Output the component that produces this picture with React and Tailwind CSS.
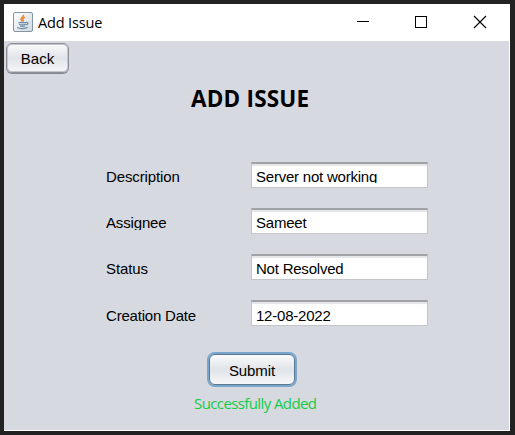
import React from "react";

const fields = [
  { label: "Description", value: "Server not working", clip: "h-[19px]", labelClip: "h-[20px]", shift: "", spacing: "tracking-[-0.12px]" },
  { label: "Assignee", value: "Sameet", clip: "h-[22px]", labelClip: "h-[16px]", shift: "", spacing: "tracking-[-0.15px]" },
  { label: "Status", value: "Not Resolved", clip: "h-[23px]", labelClip: "h-[20px]", shift: "", spacing: "tracking-[-0.1px]" },
  { label: "Creation Date", value: "12-08-2022", clip: "h-[23px]", labelClip: "h-[20px]", shift: "pt-px", spacing: "tracking-[-0.2px]" },
];

function JavaIcon() {
  return (
    <svg width="20" height="20" viewBox="0 0 20 20" fill="none">
      <defs>
        <linearGradient id="tile" x1="0" y1="0" x2="1" y2="1">
          <stop offset="0" stopColor="#ffffff" />
          <stop offset="1" stopColor="#cfd8df" />
        </linearGradient>
      </defs>
      <rect x="0.5" y="0.5" width="19" height="19" rx="1.5" fill="url(#tile)" stroke="#8395a3" />
      <path d="M10.4 2.8c.8 2.2-3.4 3-2.4 5 .3.7.9 1.1 1.2 1.7M12 5.2c-2 .9-2.8 1.7-1.9 2.7.5.6.3 1.1-.2 1.6" stroke="#ea8a3e" strokeWidth="1.5" />
      <path d="M5.4 10.6h7.7M6.1 12.3c1.7.7 4.8.7 6.5 0M7 14c1.5.5 3.6.5 5 0M13.1 10.4c2.5-.5 2.4 2.2-.4 2.6M4.2 15.5c2.3 1.5 8.1 1.4 10.4-.2" stroke="#6d8ba4" strokeWidth="1.2" />
    </svg>
  );
}

export default function App() {
  return (
    <div className="h-[435px] w-[515px] overflow-hidden bg-[#222222] pt-1 pl-1 font-['Liberation_Sans',sans-serif] text-[15px] leading-[17px] text-black">
      <div className="flex h-[427px] w-[506px] flex-col bg-white pr-px pb-px">
        <header className="flex h-[37px] shrink-0 items-start">
          <div className="ml-[9px] mt-[8px]"><JavaIcon /></div>
          <span className="ml-[5px] mt-[9px] w-[120px] whitespace-nowrap font-['Open_Sans',sans-serif] text-[14.5px] leading-5 tracking-[-0.15px]">Add Issue</span>
          <svg className="ml-auto mr-[22px] mt-[11px]" width="131" height="14" viewBox="0 0 131 14" fill="none" stroke="black">
            <path d="M1 6.5h12" />
            <rect x="59.5" y="1.5" width="11" height="11" />
            <path d="M118 1l12 12M130 1l-12 12" strokeWidth="1.1" />
          </svg>
        </header>
        <main className="flex flex-1 flex-col items-start bg-[#d6d9e0]">
          <button className="ml-[2px] mt-[2px] h-[30px] w-[63px] rounded-[6px] border border-[#8c8f97] bg-linear-to-b from-[#fbfbfc] via-[#e0e3e8] to-[#f6f7f9] pt-px shadow-[0_1px_0_#868991,inset_0_0_0_1px_#c3c6cd]">Back</button>
          <h1 className="ml-[187px] mt-[10px] whitespace-nowrap font-['Open_Sans',sans-serif] text-[22.5px] leading-[32px] font-bold tracking-[0.2px]">ADD ISSUE</h1>
          <form className="ml-[102px] mt-[47px] flex flex-col gap-[20px]">
            {fields.map((f) => (
              <div key={f.label} className="flex h-[26px] items-start">
                <label className={`mt-[6px] w-[145px] overflow-hidden whitespace-nowrap ${f.labelClip} ${f.shift} ${f.spacing}`}>{f.label}</label>
                <div className="h-[26px] w-[177px] border border-t-2 border-[#c3c5ca] border-t-[#a0a2a6] bg-white shadow-[inset_0_2px_1px_#e4e5e7]">
                  <div className={`overflow-hidden pl-1 pt-[4px] ${f.clip}`}>
                    <div className={`whitespace-nowrap tracking-[-0.22px] ${f.shift}`}>{f.value}</div>
                  </div>
                </div>
              </div>
            ))}
          </form>
          <button className="ml-[205px] mt-[28px] h-[31px] w-[86px] rounded-[6px] border border-[#5d7891] bg-linear-to-b from-[#fbfbfc] via-[#e0e3e8] to-[#f6f7f9] pt-px tracking-[-0.1px] shadow-[0_0_0_2px_#79a5cc]">Submit</button>
          <p className="ml-[190px] mt-[8px] whitespace-nowrap font-['Open_Sans',sans-serif] text-[15px] leading-[20px] tracking-[-0.6px] text-[#12cc48]">Successfully Added</p>
        </main>
      </div>
    </div>
  );
}
